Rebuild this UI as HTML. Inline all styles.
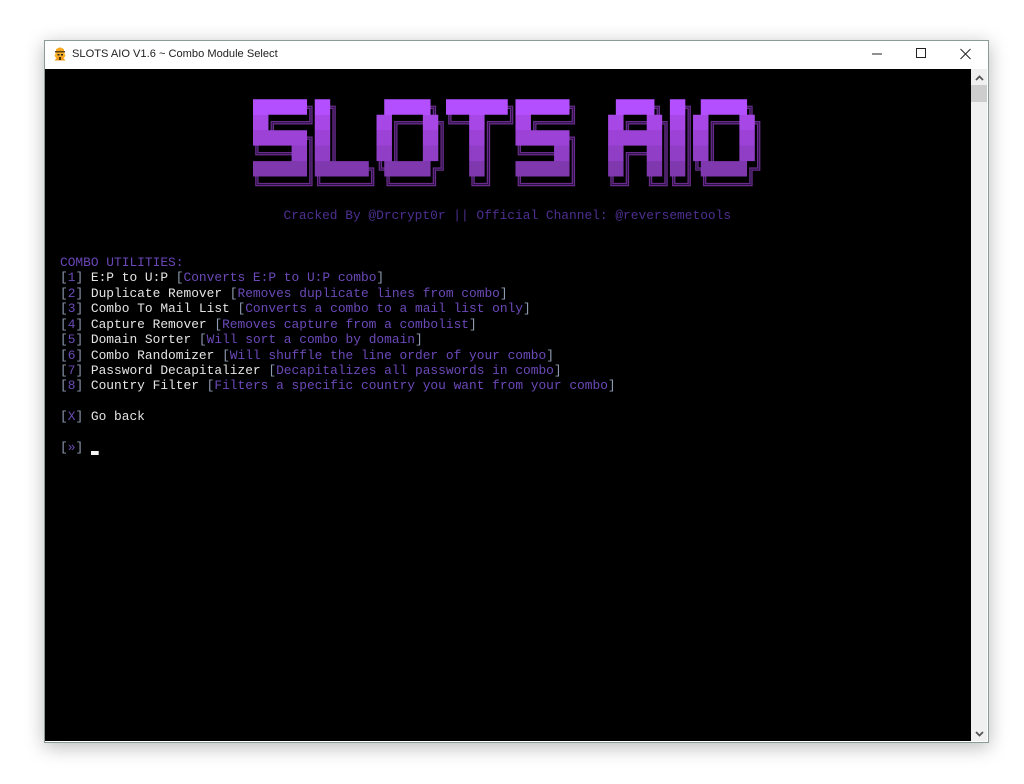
<!DOCTYPE html>
<html><head><meta charset="utf-8"><style>
html,body{margin:0;padding:0;width:1024px;height:784px;background:#fff;overflow:hidden}
#win{position:absolute;left:44px;top:40px;width:943px;height:701px;background:#fff;border:1px solid #8b9c98;box-shadow:0 4px 18px rgba(0,0,0,.28)}
#title{position:absolute;left:72px;top:46px;font:11.1px/16px "Liberation Sans",sans-serif;color:#222;white-space:pre}
#con{position:absolute;left:45px;top:69px;width:926px;height:672px;background:#000}
#sb{position:absolute;left:971px;top:69px;width:16px;height:672px;background:#f0f0f0}
#th{position:absolute;left:971px;top:85px;width:16px;height:17px;background:#cdcdcd}
.l{position:absolute;left:60px;font:12.87px/15.4px "Liberation Mono",monospace;white-space:pre;color:#e4e4e4}
.b{color:#8e9ab0}.n{color:#6a4cb4}.d{color:#6b49b8}
svg{position:absolute;left:0;top:0}
</style></head><body>
<div id="win"></div>
<div id="title">SLOTS AIO V1.6 ~ Combo Module Select</div>
<div id="con"></div><div id="sb"></div><div id="th"></div>
<svg width="1024" height="784">
<defs>
<linearGradient id="g" gradientUnits="userSpaceOnUse" x1="0" y1="0" x2="0" y2="5">
<stop offset="0" stop-color="#b44fff"/><stop offset=".2" stop-color="#b44fff"/>
<stop offset=".2" stop-color="#a748e6"/><stop offset=".4" stop-color="#a748e6"/>
<stop offset=".4" stop-color="#9c42d6"/><stop offset=".6" stop-color="#9c42d6"/>
<stop offset=".6" stop-color="#913ec6"/><stop offset=".8" stop-color="#913ec6"/>
<stop offset=".8" stop-color="#7f38ad"/><stop offset="1" stop-color="#7f38ad"/>
</linearGradient>
</defs>
<g fill="none">
<path transform="translate(256.86,107.3) scale(7.72,15.45)" vector-effect="non-scaling-stroke" stroke="#6a2c8c" stroke-width="3.4" d="M0 0H7V1H2V2H7V5H0V4H5V3H0Z M8 0H10V4H15V5H8Z M17 0H23V1H24V4H23V5H17V4H16V1H17Z M18 1V4H22V1Z M25 0H33V1H30V5H28V1H25Z M34 0H41V1H36V2H41V5H34V4H39V3H34Z M47 0H52V1H53V5H51V3H48V5H46V1H47Z M48 1V2H51V1Z M54 0H56V5H54Z M58 0H64V1H65V4H64V5H58V4H57V1H58Z M59 1V4H63V1Z"/>
<path transform="translate(256.86,107.3) scale(7.72,15.45)" vector-effect="non-scaling-stroke" stroke="#2a1245" stroke-width="1" d="M0 0H7V1H2V2H7V5H0V4H5V3H0Z M8 0H10V4H15V5H8Z M17 0H23V1H24V4H23V5H17V4H16V1H17Z M18 1V4H22V1Z M25 0H33V1H30V5H28V1H25Z M34 0H41V1H36V2H41V5H34V4H39V3H34Z M47 0H52V1H53V5H51V3H48V5H46V1H47Z M48 1V2H51V1Z M54 0H56V5H54Z M58 0H64V1H65V4H64V5H58V4H57V1H58Z M59 1V4H63V1Z"/>
</g>
<g transform="translate(253,99.3) scale(7.72,15.45)">
<path fill="url(#g)" fill-rule="evenodd" d="M0 0H7V1H2V2H7V5H0V4H5V3H0Z M8 0H10V4H15V5H8Z M17 0H23V1H24V4H23V5H17V4H16V1H17Z M18 1V4H22V1Z M25 0H33V1H30V5H28V1H25Z M34 0H41V1H36V2H41V5H34V4H39V3H34Z M47 0H52V1H53V5H51V3H48V5H46V1H47Z M48 1V2H51V1Z M54 0H56V5H54Z M58 0H64V1H65V4H64V5H58V4H57V1H58Z M59 1V4H63V1Z"/>
</g>
<!-- app icon -->
<g>
<path d="M56 49.5 Q60 45.5 64 49.5 V51 H56Z" fill="#f7a81e"/>
<rect x="55" y="51" width="10" height="1.5" fill="#5a4015"/>
<path d="M56 52.5H64L65.5 55.5L64 58H56L54.5 55.5Z" fill="#fbb02a"/>
<rect x="57.5" y="54" width="2" height="1.5" fill="#222"/><rect x="61" y="54" width="2" height="1.5" fill="#222"/>
<path d="M54.5 60.5L58 56.5H62L65.5 60.5Z" fill="#f09a1c"/>
<rect x="59" y="57" width="2" height="3" fill="#4a3310"/>
</g>
<!-- window buttons -->
<rect x="872" y="53.5" width="10" height="1" fill="#222"/>
<rect x="916.5" y="48.5" width="9" height="9" fill="none" stroke="#222" stroke-width="1"/>
<path d="M960.5 49L970.5 59M970.5 49L960.5 59" stroke="#222" stroke-width="1" fill="none"/>
<!-- scrollbar arrows -->
<path d="M976 80L979.5 76.5L983 80" fill="none" stroke="#555" stroke-width="1.8"/>
<path d="M976 732L979.5 735.5L983 732" fill="none" stroke="#555" stroke-width="1.8"/>
<rect x="91" y="451" width="7.7" height="4" fill="#f2f2f2"/>
</svg>
<div class="l" style="left:283.5px;top:208px;color:#4d2f90">Cracked By @Drcrypt0r || Official Channel: @reversemetools</div>
<div class="l" style="top:255px;color:#6a46b8">COMBO UTILITIES:</div>
<div class="l" style="top:270.4px"><span class="b">[</span><span class="n">1</span><span class="b">]</span> E:P to U:P <span class="b">[</span><span class="d">Converts E:P to U:P combo</span><span class="b">]</span></div>
<div class="l" style="top:285.8px"><span class="b">[</span><span class="n">2</span><span class="b">]</span> Duplicate Remover <span class="b">[</span><span class="d">Removes duplicate lines from combo</span><span class="b">]</span></div>
<div class="l" style="top:301.2px"><span class="b">[</span><span class="n">3</span><span class="b">]</span> Combo To Mail List <span class="b">[</span><span class="d">Converts a combo to a mail list only</span><span class="b">]</span></div>
<div class="l" style="top:316.6px"><span class="b">[</span><span class="n">4</span><span class="b">]</span> Capture Remover <span class="b">[</span><span class="d">Removes capture from a combolist</span><span class="b">]</span></div>
<div class="l" style="top:332px"><span class="b">[</span><span class="n">5</span><span class="b">]</span> Domain Sorter <span class="b">[</span><span class="d">Will sort a combo by domain</span><span class="b">]</span></div>
<div class="l" style="top:348px"><span class="b">[</span><span class="n">6</span><span class="b">]</span> Combo Randomizer <span class="b">[</span><span class="d">Will shuffle the line order of your combo</span><span class="b">]</span></div>
<div class="l" style="top:363px"><span class="b">[</span><span class="n">7</span><span class="b">]</span> Password Decapitalizer <span class="b">[</span><span class="d">Decapitalizes all passwords in combo</span><span class="b">]</span></div>
<div class="l" style="top:378.2px"><span class="b">[</span><span class="n">8</span><span class="b">]</span> Country Filter <span class="b">[</span><span class="d">Filters a specific country you want from your combo</span><span class="b">]</span></div>
<div class="l" style="top:409px"><span class="b">[</span><span class="n">X</span><span class="b">]</span> Go back</div>
<div class="l" style="top:439.8px"><span class="b">[</span><span class="n">»</span><span class="b">]</span></div>
</body></html>
